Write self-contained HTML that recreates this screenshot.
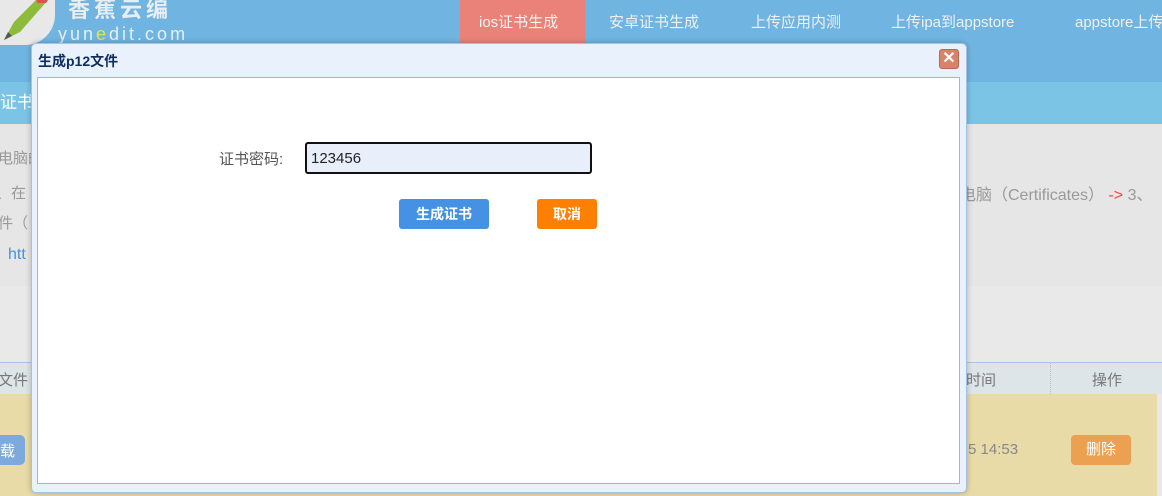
<!DOCTYPE html>
<html><head><meta charset="utf-8"><style>
*{margin:0;padding:0;box-sizing:border-box}
body{width:1162px;height:496px;overflow:hidden;background:#e9e9e9;font-family:"Liberation Sans","Noto Sans CJK SC",sans-serif;position:relative;font-size:14px}
.abs{position:absolute}
</style></head><body>
<div class="abs" style="left:0;top:0;width:1162px;height:82px;background:#70b5e1"></div>
<div class="abs" style="left:0;top:0;width:55px;height:45px;background:#e8e8e8;border-radius:0 0 30px 0"></div>
<svg class="abs" style="left:0;top:0" width="60" height="45"><polygon points="4,40 14,22 36,0 48,0 20,32" fill="#8dbb3c"/><polygon points="36,0 48,0 46,3 38,3" fill="#d9534f"/><polygon points="4,40 8,32 12,36" fill="#555"/></svg>
<div class="abs" style="left:68px;top:-8px;font-size:22px;font-weight:bold;color:#e8eef4;letter-spacing:4px">香蕉云编</div>
<div class="abs" style="left:58px;top:24px;font-size:18px;color:#e8eef4;letter-spacing:3px">yun<span style="color:#e8e05a">e</span>dit.com</div>
<div class="abs" style="left:460px;top:0;width:125px;height:43px;background:#ea8279"></div>
<div class="abs" style="left:479px;top:11px;color:#f5f5f5;font-size:15px">ios证书生成</div>
<div class="abs" style="left:609px;top:11px;color:#f0f0f0;font-size:15px">安卓证书生成</div>
<div class="abs" style="left:751px;top:11px;color:#f0f0f0;font-size:15px">上传应用内测</div>
<div class="abs" style="left:891px;top:11px;color:#f0f0f0;font-size:15px">上传ipa到appstore</div>
<div class="abs" style="left:1075px;top:11px;color:#f0f0f0;font-size:15px;white-space:nowrap">appstore上传</div>
<div class="abs" style="left:0;top:82px;width:1162px;height:42px;background:#7cc4e6"></div>
<div class="abs" style="left:0;top:88px;color:#fff;font-size:17px">证书</div>
<div class="abs" style="left:0;top:124px;width:1162px;height:162px;background:#e6e6e6"></div>
<div class="abs" style="left:-2px;top:147px;color:#999;font-size:15px">电脑的</div>
<div class="abs" style="left:-4px;top:182px;color:#999;font-size:15px">、在</div>
<div class="abs" style="left:-2px;top:212px;color:#999;font-size:15px">件（</div>
<div class="abs" style="left:8px;top:246px;color:#4a90e2;font-size:16px">htt</div>
<div class="abs" style="left:960px;top:181px;color:#999;font-size:16px;white-space:nowrap">电脑（Certificates）<span style="color:#e44"> -&gt; </span>3、</div>
<div class="abs" style="left:0;top:362px;width:1162px;height:32px;background:#dde5e8;border-top:1px solid #a9c4e4"></div>
<div class="abs" style="left:-2px;top:369px;color:#777;font-size:15px">文件</div>
<div class="abs" style="left:966px;top:369px;color:#777;font-size:15px">时间</div>
<div class="abs" style="left:1050px;top:363px;height:31px;border-left:1px dotted #bbb"></div>
<div class="abs" style="left:1092px;top:369px;color:#777;font-size:15px">操作</div>
<div class="abs" style="left:0;top:394px;width:1157px;height:102px;background:#e9dba7"></div>
<div class="abs" style="left:-8px;top:435px;width:33px;height:30px;background:#7ea9dc;border-radius:5px;color:#fff;font-size:15px;padding:5px 0 0 8px">载</div>
<div class="abs" style="left:968px;top:441px;color:#888;font-size:15px">5 14:53</div>
<div class="abs" style="left:1071px;top:435px;width:60px;height:30px;background:#eba052;border-radius:4px;color:#fff;font-size:15px;text-align:center;line-height:30px">删除</div>
<div class="abs" style="left:31px;top:43px;width:936px;height:450px;background:#e9f1fd;border:1px solid #a6c1e8;border-radius:5px;box-shadow:0 0 6px rgba(0,0,0,.25)"></div>
<div class="abs" style="left:38px;top:51px;color:#0e2d5e;font-size:14px;font-weight:bold">生成p12文件</div>
<div class="abs" style="left:939px;top:49px;width:20px;height:20px;background:#d9826a;border:1px solid #b86a55;border-radius:3px;color:#fff;font-size:16px;font-weight:bold;text-align:center;line-height:18px">✕</div>
<div class="abs" style="left:37px;top:77px;width:923px;height:407px;background:#fff;border:1px solid #99b7e2"></div>
<div class="abs" style="left:219px;top:148px;color:#555;font-size:15px">证书密码:</div>
<div class="abs" style="left:305px;top:142px;width:287px;height:32px;background:#e8effb;border:2px solid #111;border-radius:3px;padding:6px 4px;font-size:15px;color:#222">123456</div>
<div class="abs" style="left:399px;top:199px;width:90px;height:30px;background:#4591e3;border-radius:3px;color:#fff;font-size:14px;font-weight:bold;text-align:center;line-height:30px">生成证书</div>
<div class="abs" style="left:537px;top:199px;width:60px;height:30px;background:#ff8000;border-radius:3px;color:#fff;font-size:14px;font-weight:bold;text-align:center;line-height:30px">取消</div>
</body></html>
